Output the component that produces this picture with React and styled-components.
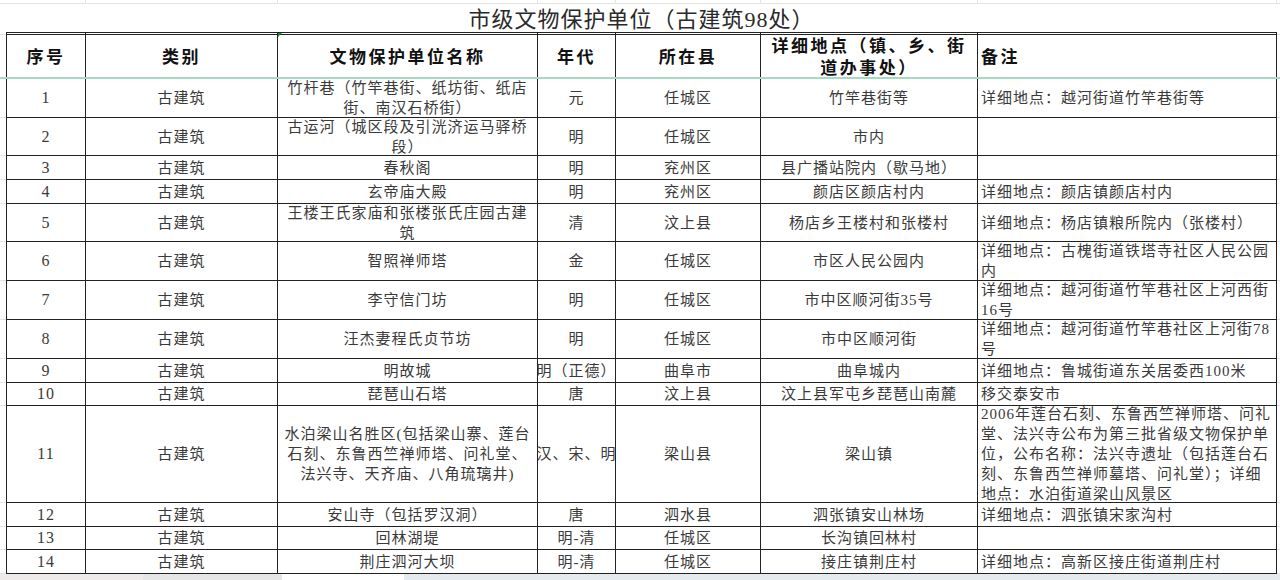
import React from "react";
import styled, { createGlobalStyle } from "styled-components";

const GlobalStyle = createGlobalStyle`
  html, body {
    margin: 0;
    padding: 0;
    background: #ffffff;
    overflow: hidden;
  }
  body {
    font-family: "Liberation Serif", "Noto Sans CJK SC", serif;
  }
`;

const COLS = "6px 80px 192px 260px 78px 145px 217px 299px 1fr";

const Sheet = styled.div`
  position: relative;
  width: 1280px;
  height: 580px;
  overflow: hidden;
  display: flex;
  flex-direction: column;
`;

const Row = styled.div`
  display: grid;
  grid-template-columns: ${COLS};
  height: ${(p) => p.$h}px;
  flex: none;
`;

const Blank = styled.div`
  border-bottom: 1px solid #e2e2e2;
  border-right: ${(p) => (p.$line ? "1px solid #e6e6e6" : "none")};
`;

const TitleCell = styled.div`
  grid-column: 2 / 9;
  display: flex;
  align-items: center;
  justify-content: center;
  font-family: "Liberation Serif", "Noto Sans CJK SC", serif;
  font-size: 22px;
  letter-spacing: 1px;
  line-height: 28px;
  color: #2a2a2a;
  padding-top: 2px;
  border-bottom: 1px solid #222;
`;

const Cell = styled.div`
  position: relative;
  display: flex;
  align-items: center;
  justify-content: ${(p) => (p.$left ? "flex-start" : "center")};
  padding: 0 3px;
  overflow: hidden;
  border-right: 1px solid #222;
  border-bottom: 1px solid #222;
  border-left: ${(p) => (p.$first ? "1px solid #222" : "none")};
  font-size: 15px;
  letter-spacing: 1px;
  line-height: 20px;
  color: #3a3a3a;
  min-width: 0;

  span {
    flex: none;
    max-width: ${(p) => (p.$nowrap ? "none" : "100%")};
    white-space: ${(p) => (p.$nowrap ? "nowrap" : "normal")};
    text-align: ${(p) => (p.$left ? "left" : "center")};
    font-size: ${(p) => (p.$num ? "16px" : "inherit")};
  }
`;

const HeadCell = styled(Cell)`
  border-top: 1px solid #222;
  font-family: "Noto Sans CJK SC", sans-serif;
  font-weight: 700;
  font-size: 17px;
  letter-spacing: 2.5px;
  line-height: 22px;
  color: #111;

  &::after {
    content: "";
    display: ${(p) => (p.$marked ? "block" : "none")};
    position: absolute;
    left: 0;
    top: 0;
    border-top: 4px solid #1c8a3a;
    border-right: 4px solid transparent;
  }
`;

const FreezeLine = styled.div`
  position: absolute;
  left: 0;
  right: 0;
  top: 77px;
  height: 2px;
  background: #a3dcc2;
`;

const TabBar = styled.div`
  flex: 1;
  display: flex;
  background: #e4eaed;
`;

const Tab = styled.div`
  width: ${(p) => p.$w}px;
  background: ${(p) => p.$bg};
`;

const headers = [
  { t: "序号" },
  { t: "类别" },
  { t: "文物保护单位名称", marked: true },
  { t: "年代" },
  { t: "所在县" },
  { t: "详细地点（镇、乡、街道办事处）" },
  { t: "备注", left: true },
];

const rows = [
  [39, "1", "竹杆巷（竹竿巷街、纸坊街、纸店街、南汉石桥街）", "元", "任城区", "竹竿巷街等", "详细地点：越河街道竹竿巷街等"],
  [38, "2", "古运河（城区段及引洸济运马驿桥段）", "明", "任城区", "市内", ""],
  [24, "3", "春秋阁", "明", "兖州区", "县广播站院内（歇马地）", ""],
  [24, "4", "玄帝庙大殿", "明", "兖州区", "颜店区颜店村内", "详细地点：颜店镇颜店村内"],
  [38, "5", "王楼王氏家庙和张楼张氏庄园古建筑", "清", "汶上县", "杨店乡王楼村和张楼村", "详细地点：杨店镇粮所院内（张楼村）"],
  [39, "6", "智照禅师塔", "金", "任城区", "市区人民公园内", "详细地点：古槐街道铁塔寺社区人民公园内"],
  [39, "7", "李守信门坊", "明", "任城区", "市中区顺河街35号", "详细地点：越河街道竹竿巷社区上河西街16号"],
  [39, "8", "汪杰妻程氏贞节坊", "明", "任城区", "市中区顺河街", "详细地点：越河街道竹竿巷社区上河街78号"],
  [24, "9", "明故城", "明（正德）", "曲阜市", "曲阜城内", "详细地点：鲁城街道东关居委西100米"],
  [23, "10", "琵琶山石塔", "唐", "汶上县", "汶上县军屯乡琵琶山南麓", "移交泰安市"],
  [97, "11", "水泊梁山名胜区(包括梁山寨、莲台石刻、东鲁西竺禅师塔、问礼堂、法兴寺、天齐庙、八角琉璃井)", "汉、宋、明", "梁山县", "梁山镇", "2006年莲台石刻、东鲁西竺禅师塔、问礼堂、法兴寺公布为第三批省级文物保护单位，公布名称：法兴寺遗址（包括莲台石刻、东鲁西竺禅师墓塔、问礼堂）；详细地点：水泊街道梁山风景区"],
  [24, "12", "安山寺（包括罗汉洞）", "唐", "泗水县", "泗张镇安山林场", "详细地点：泗张镇宋家沟村"],
  [23, "13", "回林湖堤", "明-清", "任城区", "长沟镇回林村", ""],
  [24, "14", "荆庄泗河大坝", "明-清", "任城区", "接庄镇荆庄村", "详细地点：高新区接庄街道荆庄村"],
];

function App() {
  return (
    <>
      <GlobalStyle />
      <Sheet>
        <Row $h={4}>
          <Blank />
          {Array.from({ length: 7 }).map((_, i) => (
            <Blank key={i} $line />
          ))}
          <Blank />
        </Row>

        <Row $h={28}>
          <Blank />
          <TitleCell>市级文物保护单位（古建筑98处）</TitleCell>
          <Blank />
        </Row>

        <Row $h={47}>
          <Blank />
          {headers.map((h, i) => (
            <HeadCell key={h.t} $first={i === 0} $left={h.left} $marked={h.marked}>
              <span>{h.t}</span>
            </HeadCell>
          ))}
          <Blank />
        </Row>

        {rows.map(([h, no, name, era, county, place, note]) => (
          <Row $h={h} key={no}>
            <Blank />
            <Cell $first $num>
              <span>{no}</span>
            </Cell>
            <Cell>
              <span>古建筑</span>
            </Cell>
            <Cell>
              <span>{name}</span>
            </Cell>
            <Cell $nowrap>
              <span>{era}</span>
            </Cell>
            <Cell>
              <span>{county}</span>
            </Cell>
            <Cell>
              <span>{place}</span>
            </Cell>
            <Cell $left>
              <span>{note}</span>
            </Cell>
            <Blank />
          </Row>
        ))}

        <TabBar>
          <Tab $w={143} $bg="#eeeaea" />
          <Tab $w={139} $bg="#e6e6e6" />
          <Tab $w={122} $bg="#ffffff" />
        </TabBar>

        <FreezeLine />
      </Sheet>
    </>
  );
}

export default App;
